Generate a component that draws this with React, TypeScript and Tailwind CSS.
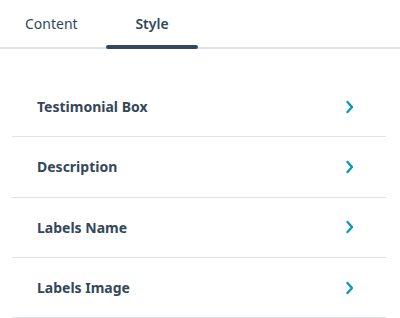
import React from 'react'

const sections = ['Testimonial Box', 'Description', 'Labels Name', 'Labels Image']

const Chevron = () => (
  <svg width="9" height="14" viewBox="0 0 9 14" fill="none" className="text-[#0a9bb8]">
    <path d="M2.5 2L7 7L2.5 12" stroke="currentColor" strokeWidth="2.4" strokeLinecap="round" strokeLinejoin="round" />
  </svg>
)

export default function App() {
  return (
    <div className="w-[400px] h-[318px] bg-white overflow-hidden font-['Noto_Sans',sans-serif] text-[#33475b]">
      <div className="flex h-[49px] border-b-2 border-[#dfe3eb]">
        <button className="relative w-[106px] pb-[1px] pl-[25px] text-left text-[14px] text-[#33475b]">
          Content
        </button>
        <button className="relative w-[92px] pb-[1px] text-center text-[14px] font-semibold text-[#33475b]">
          Style
          <span className="absolute left-0 right-0 -bottom-[2px] h-[4px] rounded-full bg-[#33475b]" />
        </button>
      </div>
      <div className="mt-[28px] ml-[12px] w-[374px]">
        {sections.map((s) => (
          <div key={s} className="flex h-[60.33px] items-center justify-between border-b border-[#dfe3eb] pl-[25px] pr-[32px]">
            <span className="text-[14px] font-bold">{s}</span>
            <Chevron />
          </div>
        ))}
      </div>
    </div>
  )
}
